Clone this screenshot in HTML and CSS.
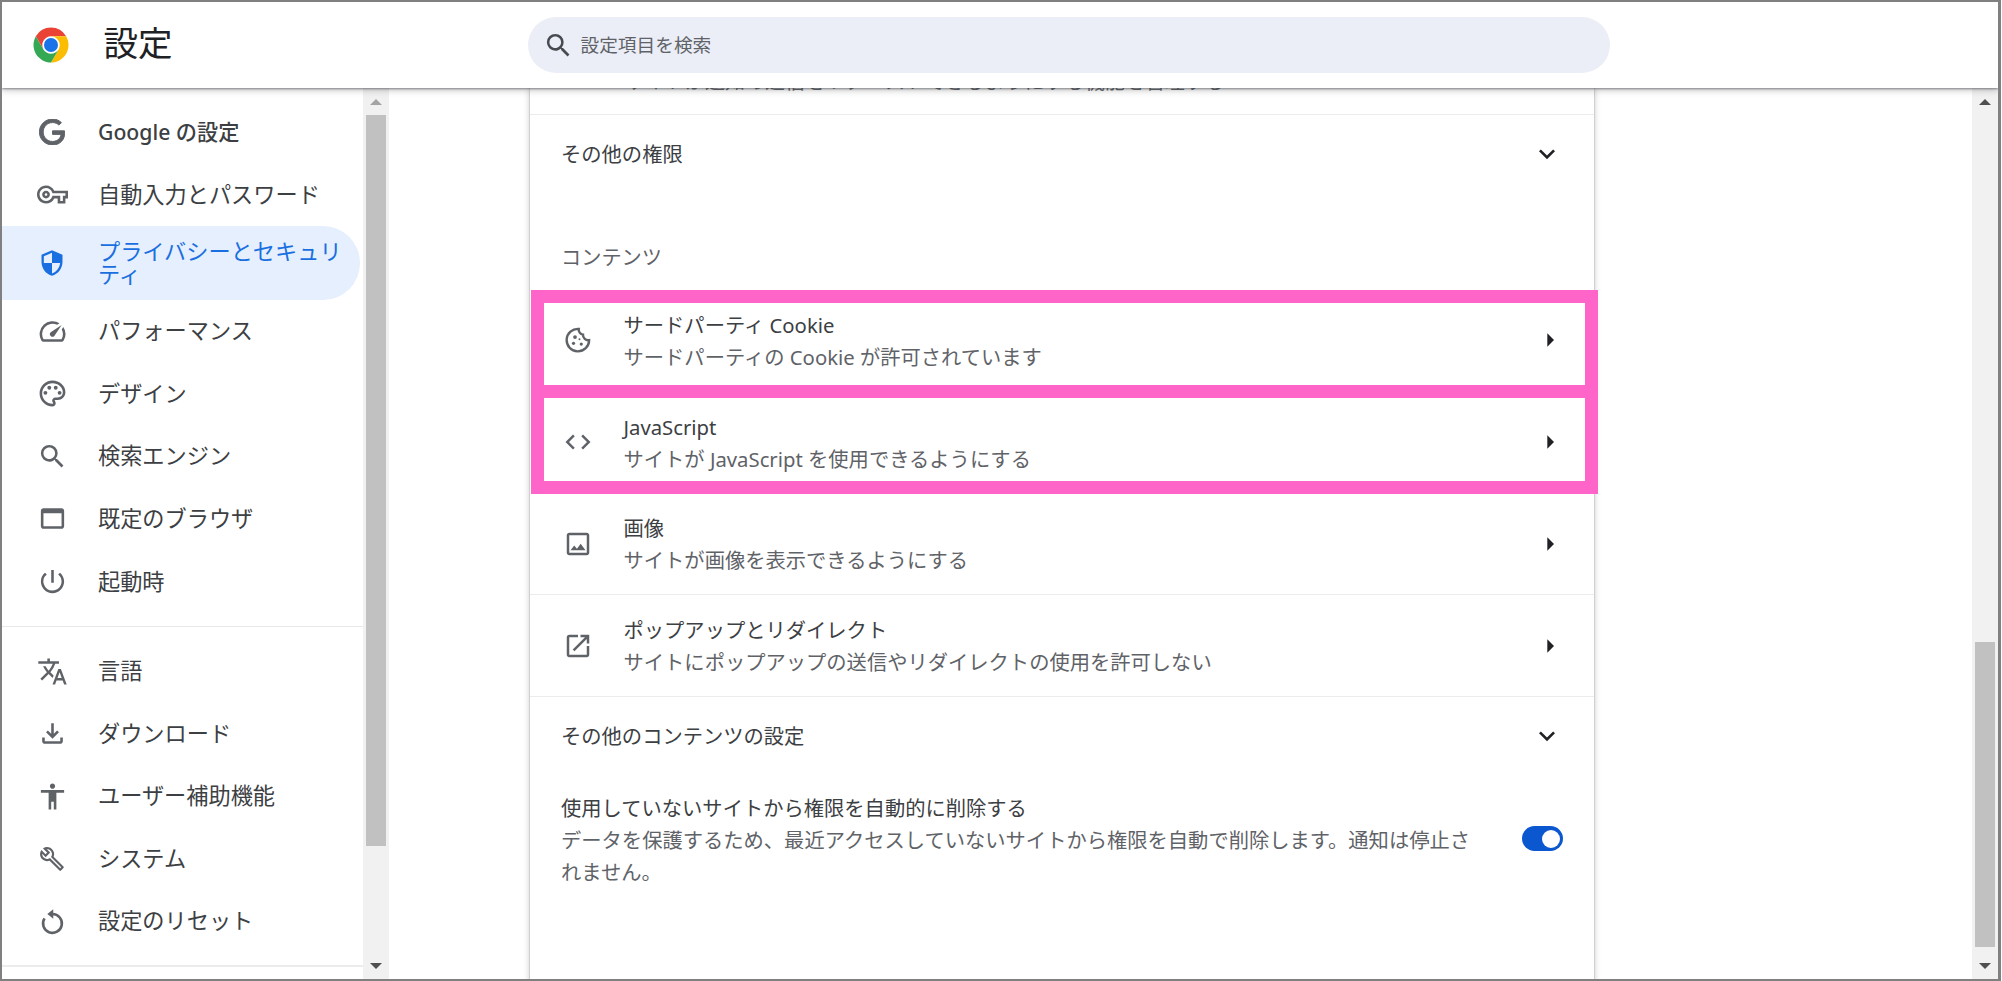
FILE: index.html
```html
<!DOCTYPE html>
<html lang="ja">
<head>
<meta charset="utf-8">
<title>設定</title>
<link rel="stylesheet" href="styles.css">
</head>
<body>
<div class="frame">
  <header class="topbar">
    <div class="brand">
      <svg class="logo" viewBox="0 0 48 48"><path fill="#ea4335" d="M24 4A20 20 0 0 1 41.32 14H24A10 10 0 0 0 15.34 29L6.68 14A20 20 0 0 1 24 4z"/><path fill="#fbbc04" d="M41.32 14A20 20 0 0 1 24 44L32.66 29A10 10 0 0 0 24 14z"/><path fill="#34a853" d="M24 44A20 20 0 0 1 6.68 14L15.34 29A10 10 0 0 0 32.66 29z"/><circle cx="24" cy="24" r="8" fill="#1a73e8"/></svg>
      <h1 class="brand-title">設定</h1>
    </div>
    <div class="search">
      <svg class="search-icon" viewBox="0 0 24 24"><path d="M15.5 14h-.79l-.28-.27A6.471 6.471 0 0 0 16 9.5 6.5 6.5 0 1 0 9.5 16c1.61 0 3.09-.59 4.23-1.57l.27.28v.79l5 4.99L20.49 19l-4.99-5zm-6 0C7.01 14 5 11.99 5 9.5S7.01 5 9.5 5 14 7.01 14 9.5 11.99 14 9.5 14z"/></svg>
      <span class="search-text">設定項目を検索</span>
    </div>
  </header>
  <div class="body">
    <nav class="side">
      <div class="nav-list">
        <a class="nav-item"><svg class="nav-icon g" viewBox="0 0 24 24"><path d="M12.48 10.92v3.28h7.84c-.24 1.84-.853 3.187-1.787 4.133-1.147 1.147-2.933 2.4-6.053 2.4-4.827 0-8.6-3.893-8.6-8.72s3.773-8.72 8.6-8.72c2.6 0 4.507 1.027 5.907 2.347l2.307-2.307C18.747 1.44 16.133 0 12.48 0 5.867 0 .307 5.387.307 12s5.56 12 12.173 12c3.573 0 6.267-1.173 8.373-3.36 2.16-2.16 2.84-5.213 2.84-7.667 0-.76-.053-1.467-.173-2.053H12.48z"/></svg><span class="nav-label strong">Google の設定</span></a>
        <a class="nav-item"><svg class="nav-icon" viewBox="0 0 24 24"><path d="M22 19h-6v-4h-2.68c-1.14 2.42-3.6 4-6.32 4-3.86 0-7-3.14-7-7s3.14-7 7-7c2.72 0 5.17 1.58 6.32 4H24v6h-2v4zm-4-2h2v-4h2v-2H11.94l-.23-.67C11.01 8.34 9.11 7 7 7c-2.76 0-5 2.24-5 5s2.24 5 5 5c2.11 0 4.01-1.34 4.71-3.33l.23-.67H18v4zM7 15c-1.65 0-3-1.35-3-3s1.35-3 3-3 3 1.35 3 3-1.35 3-3 3zm0-4c-.55 0-1 .45-1 1s.45 1 1 1 1-.45 1-1-.45-1-1-1z"/></svg><span class="nav-label">自動入力とパスワード</span></a>
        <a class="nav-item active"><svg class="nav-icon" viewBox="0 0 24 24"><path d="M12 1L3 5v6c0 5.55 3.84 10.74 9 12 5.16-1.26 9-6.45 9-12V5l-9-4zm0 10.99h7c-.53 4.12-3.28 7.79-7 8.94V12H5V6.3l7-3.11v8.8z"/></svg><span class="nav-label wrap">プライバシーとセキュリティ</span></a>
        <a class="nav-item"><svg class="nav-icon" viewBox="0 0 24 24"><path d="M20.38 8.57l-1.23 1.85a8 8 0 0 1-.22 7.58H5.07A8 8 0 0 1 15.58 6.85l1.85-1.23A10 10 0 0 0 3.35 19a2 2 0 0 0 1.72 1h13.85a2 2 0 0 0 1.74-1 10 10 0 0 0-.27-10.44zm-9.79 6.84a2 2 0 0 0 2.83 0l5.66-8.49-8.49 5.66a2 2 0 0 0 0 2.83z"/></svg><span class="nav-label">パフォーマンス</span></a>
        <a class="nav-item"><svg class="nav-icon" viewBox="0 0 24 24"><path d="M12 22C6.49 22 2 17.51 2 12S6.49 2 12 2s10 4.04 10 9c0 3.31-2.69 6-6 6h-1.77c-.28 0-.5.22-.5.5 0 .12.05.23.13.33.41.47.64 1.06.64 1.67 0 1.38-1.12 2.5-2.5 2.5zm0-18c-4.41 0-8 3.59-8 8s3.59 8 8 8c.28 0 .5-.22.5-.5 0-.16-.08-.28-.14-.35-.41-.46-.63-1.05-.63-1.65 0-1.38 1.12-2.5 2.5-2.5H16c2.21 0 4-1.79 4-4 0-3.86-3.59-7-8-7z"/><circle cx="6.5" cy="11.5" r="1.5"/><circle cx="9.5" cy="7.5" r="1.5"/><circle cx="14.5" cy="7.5" r="1.5"/><circle cx="17.5" cy="11.5" r="1.5"/></svg><span class="nav-label">デザイン</span></a>
        <a class="nav-item"><svg class="nav-icon" viewBox="0 0 24 24"><path d="M15.5 14h-.79l-.28-.27A6.471 6.471 0 0 0 16 9.5 6.5 6.5 0 1 0 9.5 16c1.61 0 3.09-.59 4.23-1.57l.27.28v.79l5 4.99L20.49 19l-4.99-5zm-6 0C7.01 14 5 11.99 5 9.5S7.01 5 9.5 5 14 7.01 14 9.5 11.99 14 9.5 14z"/></svg><span class="nav-label">検索エンジン</span></a>
        <a class="nav-item"><svg class="nav-icon" viewBox="0 0 24 24"><path d="M19 4H5c-1.11 0-2 .9-2 2v12c0 1.1.89 2 2 2h14c1.1 0 2-.9 2-2V6c0-1.1-.89-2-2-2zm0 14H5V8h14v10z"/></svg><span class="nav-label">既定のブラウザ</span></a>
        <a class="nav-item"><svg class="nav-icon" viewBox="0 0 24 24"><path d="M13 3h-2v10h2V3zm4.83 2.17l-1.42 1.42A6.92 6.92 0 0 1 19 12c0 3.87-3.13 7-7 7A6.995 6.995 0 0 1 7.58 6.58L6.17 5.17A8.932 8.932 0 0 0 3 12c0 4.97 4.03 9 9 9s9-4.03 9-9c0-2.74-1.23-5.18-3.17-6.83z"/></svg><span class="nav-label">起動時</span></a>
      </div>
      <div class="nav-list divided">
        <a class="nav-item"><svg class="nav-icon" viewBox="0 0 24 24"><path d="M12.87 15.07l-2.54-2.51.03-.03A17.52 17.52 0 0 0 14.07 6H17V4h-7V2H8v2H1v1.99h11.17C11.5 7.92 10.44 9.75 9 11.35 8.07 10.32 7.3 9.19 6.69 8h-2c.73 1.63 1.73 3.17 2.98 4.56l-5.09 5.02L4 19l5-5 3.11 3.11.76-2.04zM18.5 10h-2L12 22h2l1.12-3h4.75L21 22h2l-4.5-12zm-2.62 7l1.62-4.33L19.12 17h-3.24z"/></svg><span class="nav-label">言語</span></a>
        <a class="nav-item"><svg class="nav-icon" viewBox="0 0 24 24"><path d="M18 15v3H6v-3H4v3c0 1.1.9 2 2 2h12c1.1 0 2-.9 2-2v-3h-2zm-1-4l-1.41-1.41L13 12.17V4h-2v8.17L8.41 9.59 7 11l5 5 5-5z"/></svg><span class="nav-label">ダウンロード</span></a>
        <a class="nav-item"><svg class="nav-icon" viewBox="0 0 24 24"><path d="M12 2c1.1 0 2 .9 2 2s-.9 2-2 2-2-.9-2-2 .9-2 2-2zm9 7h-6v13h-2v-6h-2v6H9V9H3V7h18v2z"/></svg><span class="nav-label">ユーザー補助機能</span></a>
        <a class="nav-item"><svg class="nav-icon small" viewBox="0 0 24 24"><path d="M22.61 18.99l-9.08-9.08c.93-2.34.45-5.1-1.44-7C9.79.61 6.21.4 3.66 2.26L7.5 6.11 6.08 7.52 2.25 3.69C.39 6.23.6 9.82 2.9 12.11c1.86 1.86 4.57 2.35 6.89 1.48l9.11 9.11c.39.39 1.02.39 1.41 0l2.3-2.3c.4-.38.4-1.01 0-1.41zm-3 1.6l-9.46-9.46c-.61.45-1.29.72-2 .82-1.36.2-2.79-.21-3.83-1.25C3.37 9.76 2.93 8.5 3 7.26l3.09 3.09 4.24-4.24-3.09-3.09c1.24-.07 2.49.37 3.44 1.31 1.08 1.08 1.49 2.57 1.24 3.96-.12.71-.42 1.37-.88 1.96l9.45 9.45-.88.89z"/></svg><span class="nav-label">システム</span></a>
        <a class="nav-item"><svg class="nav-icon" viewBox="0 0 24 24"><path class="reset-line" d="M12 6.2a7.3 7.3 0 1 1-6.2 3.4"/><path d="M12.6 2.6v7.2L8 6.2z"/></svg><span class="nav-label">設定のリセット</span></a>
      </div>
      <div class="nav-end"></div>
    </nav>
    <div class="scrollbar">
      <span class="sb-up muted"></span>
      <div class="sb-track side-track"><div class="sb-thumb side-thumb"></div></div>
      <span class="sb-down"></span>
    </div>
    <main class="main">
      <div class="card">
        <div class="clip-row"><p class="clip-text">サイトが通知の送信をリクエストできるようにする機能を管理する</p></div>
        <div class="expand-row first">
          <span class="row-title">その他の権限</span>
          <svg class="chevron" viewBox="0 0 24 24"><path d="M16.59 8.59L12 13.17 7.41 8.59 6 10l6 6 6-6z"/></svg>
        </div>
        <h2 class="section">コンテンツ</h2>
        <div class="link-row plain">
          <svg class="row-icon" viewBox="0 0 24 24"><path class="cookie-line" d="M12.6 3.1a4 4 0 0 0 3.4 4.6 4.2 4.2 0 0 0 4.9 4.4A9 9 0 1 1 12.6 3.1z"/><circle cx="9.6" cy="9.6" r="1.5"/><circle cx="8.4" cy="14.6" r="1.3"/><circle cx="14.6" cy="15.2" r="1.3"/><circle cx="13.2" cy="11.4" r=".8"/></svg>
          <div class="row-text"><span class="row-title">サードパーティ Cookie</span><span class="row-sub">サードパーティの Cookie が許可されています</span></div>
          <svg class="arrow" viewBox="0 0 24 24"><path d="M10 7l5 5-5 5z"/></svg>
        </div>
        <div class="link-row plain">
          <svg class="row-icon" viewBox="0 0 24 24"><path d="M9.4 16.6L4.8 12l4.6-4.6L8 6l-6 6 6 6 1.4-1.4zm5.2 0l4.6-4.6-4.6-4.6L16 6l6 6-6 6-1.4-1.4z"/></svg>
          <div class="row-text"><span class="row-title">JavaScript</span><span class="row-sub">サイトが JavaScript を使用できるようにする</span></div>
          <svg class="arrow" viewBox="0 0 24 24"><path d="M10 7l5 5-5 5z"/></svg>
        </div>
        <div class="link-row">
          <svg class="row-icon" viewBox="0 0 24 24"><path d="M19 5v14H5V5h14m0-2H5c-1.1 0-2 .9-2 2v14c0 1.1.9 2 2 2h14c1.1 0 2-.9 2-2V5c0-1.1-.9-2-2-2zm-4.86 8.86l-3 3.87L9 13.14 6 17h12l-3.86-5.14z"/></svg>
          <div class="row-text"><span class="row-title">画像</span><span class="row-sub">サイトが画像を表示できるようにする</span></div>
          <svg class="arrow" viewBox="0 0 24 24"><path d="M10 7l5 5-5 5z"/></svg>
        </div>
        <div class="link-row">
          <svg class="row-icon" viewBox="0 0 24 24"><path d="M19 19H5V5h7V3H5c-1.11 0-2 .9-2 2v14c0 1.1.89 2 2 2h14c1.1 0 2-.9 2-2v-7h-2v7zM14 3v2h3.59l-9.83 9.83 1.41 1.41L19 6.41V10h2V3h-7z"/></svg>
          <div class="row-text"><span class="row-title">ポップアップとリダイレクト</span><span class="row-sub">サイトにポップアップの送信やリダイレクトの使用を許可しない</span></div>
          <svg class="arrow" viewBox="0 0 24 24"><path d="M10 7l5 5-5 5z"/></svg>
        </div>
        <div class="expand-row">
          <span class="row-title">その他のコンテンツの設定</span>
          <svg class="chevron" viewBox="0 0 24 24"><path d="M16.59 8.59L12 13.17 7.41 8.59 6 10l6 6 6-6z"/></svg>
        </div>
        <div class="toggle-row">
          <div class="toggle-text"><span class="row-title">使用していないサイトから権限を自動的に削除する</span><span class="row-sub">データを保護するため、最近アクセスしていないサイトから権限を自動で削除します。通知は停止されません。</span></div>
          <span class="toggle"><span class="knob"></span></span>
        </div>
      </div>
      <div class="annot annot-a"></div>
      <div class="annot annot-b"></div>
    </main>
    <div class="scrollbar">
      <span class="sb-up"></span>
      <div class="sb-track main-track"><div class="sb-thumb main-thumb"></div></div>
      <span class="sb-down"></span>
    </div>
  </div>
</div>
</body>
</html>
```
FILE: styles.css
```css
* { box-sizing: border-box; }
html, body { margin: 0; height: 100%; background: #fff; overflow: hidden; }
body { font-family: "Noto Sans", "Noto Sans CJK JP", sans-serif; color: #3c4043; }
.frame {
  width: 2001px; height: 981px;
  border: 2px solid #808080; border-right-width: 3px;
  display: flex; flex-direction: column; overflow: hidden; background: #fff;
}
.topbar {
  height: 86px; flex: none; display: flex; align-items: center;
  background: #fff; position: relative; z-index: 3;
  box-shadow: 0 1px 2px rgba(60,64,67,.55), 0 2px 7px rgba(60,64,67,.3);
}
.brand { width: 525.5px; flex: none; display: flex; align-items: center; padding-left: 27.5px; }
.logo { width: 42px; height: 42px; flex: none; }
.brand-title { margin: -4px 0 0 32px; font-size: 34.5px; font-weight: 400; line-height: 44px; color: #202124; }
.search {
  width: 1082px; height: 56px; border-radius: 28px; background: #ebeef7;
  display: flex; align-items: center; padding-left: 15px;
}
.search-icon { width: 31px; height: 31px; fill: #474b50; flex: none; }
.search-text { margin: -3px 0 0 7px; font-size: 18.7px; color: #5f6368; }
.body { flex: 1; min-height: 0; display: flex; }
.side { width: 361px; flex: none; padding-top: 12.7px; background: #fff; overflow: hidden; }
.nav-list.divided { margin-top: 12.7px; padding-top: 13.2px; border-top: 1px solid #e8e8e8; }
.nav-end { margin-top: 12px; border-top: 2px solid #ececec; }
.nav-item { height: 62.6px; display: flex; align-items: center; color: #3c4043; }
.nav-item.active {
  height: 74px; width: 358px; background: #e6effd; color: #1a6fe0;
  border-radius: 0 37px 37px 0;
}
.nav-icon { width: 31px; height: 31px; flex: none; margin-left: 34.5px; fill: #5f6368; }
.nav-icon.g { width: 26px; height: 26px; margin-left: 37px; margin-right: 2.5px; stroke: #5f6368; stroke-width: .9; }
.nav-icon.small { width: 26px; height: 26px; margin-left: 37px; margin-right: 2.5px; }
.reset-line { fill: none; stroke: #5f6368; stroke-width: 2; }
.active .nav-icon { fill: #1a6fe0; width: 28px; height: 28px; margin-left: 36px; margin-right: 1.5px; }
.nav-label { margin: -1px 0 0 30.5px; font-size: 22.2px; line-height: 23px; }
.nav-label.wrap { width: 252px; margin-top: 0; }
.nav-label.strong { font-weight: 500; font-size: 21.2px; }
.scrollbar {
  width: 26px; flex: none; background: #f1f1f1;
  display: flex; flex-direction: column; align-items: center;
}
.sb-up, .sb-down { display: block; width: 0; height: 0; flex: none; border-left: 6px solid transparent; border-right: 6px solid transparent; }
.sb-up { margin-top: 11px; border-bottom: 6px solid #505050; }
.sb-up.muted { border-bottom-color: #a3a3a3; }
.sb-down { margin-bottom: 10px; border-top: 6px solid #505050; }
.sb-track { flex: 1; width: 100%; min-height: 0; display: flex; flex-direction: column; padding: 0 3px; }
.sb-thumb { background: #c1c1c1; width: 100%; }
.side-track { padding-top: 10px; padding-bottom: 0; }
.side-thumb { height: 731px; }
.main-track { padding-top: 537px; }
.main-thumb { height: 305px; }
.main { flex: 1; min-width: 0; position: relative; overflow: hidden; padding-left: 141px; background: #fff; }
.card {
  width: 1064px; height: 900px; background: #fff;
  box-shadow: 0 0 1px rgba(60,64,67,.6), 0 0 6px rgba(60,64,67,.35);
}
.clip-row { display: flow-root; height: 27px; border-bottom: 1px solid #ececec; padding-left: 95px; }
.clip-text { margin: -22px 0 0; font-size: 20px; line-height: 32px; color: #5f6368; white-space: nowrap; }
.expand-row {
  display: flex; align-items: center; justify-content: space-between;
  padding: 0 31px 0 31px; height: 78px;
}
.expand-row.first { height: 77px; }
.chevron { width: 32px; height: 32px; fill: #202124; flex: none; }
.section { margin: 0; height: 97px; padding: 49px 0 0 31px; font-size: 20.2px; line-height: 32px; font-weight: 400; color: #5f6368; }
.link-row {
  height: 102px; display: flex; align-items: center; padding-right: 31px;
  border-bottom: 1px solid #ececec;
}
.link-row.plain { border-bottom: 0; }
.row-icon { width: 30px; height: 30px; margin-left: 32.5px; fill: #5f6368; flex: none; }
.cookie-line { fill: none; stroke: #5f6368; stroke-width: 1.9; }
.row-text { flex: 1; min-width: 0; margin-left: 31px; display: flex; flex-direction: column; padding-top: 1px; }
.row-title { font-size: 20.3px; line-height: 32px; color: #3c4043; display: block; }
.row-sub { font-size: 20.3px; line-height: 32px; color: #5f6368; display: block; }
.arrow { width: 32px; height: 32px; fill: #202124; flex: none; transform: translateX(3px); }
.toggle-row { margin-top: 17px; padding: 0 31px 0 31px; display: flex; align-items: flex-start; }
.toggle-text { width: 919px; flex: none; }
.toggle {
  margin: 34px 0 0 42px; width: 41px; height: 25px; border-radius: 12.5px; background: #0b57d0;
  display: flex; align-items: center; justify-content: flex-end; padding-right: 3px; flex: none;
}
.knob { width: 18px; height: 18px; border-radius: 50%; background: #fff; display: block; }
.annot { position: absolute; left: 141.7px; width: 1067px; height: 108px; border: 13px solid #ff64c8; z-index: 2; }
.annot-a { top: 202px; }
.annot-b { top: 297px; height: 109px; }
```
